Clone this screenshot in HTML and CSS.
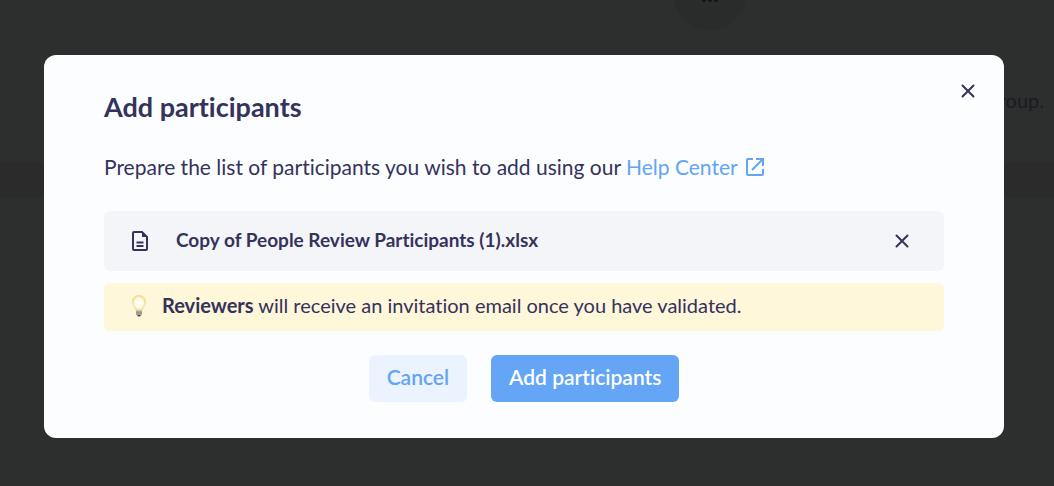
FILE: index.html
```html
<!DOCTYPE html>
<html lang="en">
<head>
<meta charset="UTF-8">
<meta name="viewport" content="width=device-width, initial-scale=1.0">
<title>Add participants</title>
<link rel="stylesheet" href="styles.css">
</head>
<body>
<!-- Page behind the modal -->
<div class="page">
  <div class="page-top">
    <button class="more" type="button" aria-label="More">
      <svg width="16" height="4" viewBox="0 0 16 4"><circle cx="2" cy="2" r="2"/><circle cx="8" cy="2" r="2"/><circle cx="14" cy="2" r="2"/></svg>
    </button>
  </div>
  <p class="page-text">group.</p>
  <div class="page-row"></div>
</div>

<!-- Modal -->
<div class="overlay">
  <div class="modal" role="dialog" aria-labelledby="modal-title">
    <button class="icon-btn close" type="button" aria-label="Close">
      <svg width="14" height="14" viewBox="0 0 14 14"><path d="M1.5 1.5l11 11M12.5 1.5l-11 11"/></svg>
    </button>
    <h1 class="title" id="modal-title">Add participants</h1>
    <p class="intro">Prepare the list of participants you wish to add using our
      <a class="help" href="#">Help Center<svg class="help-icon" width="20" height="20" viewBox="0 0 20 20"><path d="M8 2H3a1 1 0 0 0-1 1v14a1 1 0 0 0 1 1h14a1 1 0 0 0 1-1v-5M11 2h7v7M18 2L7 13"/></svg></a>
    </p>
    <div class="file">
      <svg class="file-icon" width="16" height="20" viewBox="0 0 16 20"><path d="M10 1H2a1 1 0 0 0-1 1v16a1 1 0 0 0 1 1h12a1 1 0 0 0 1-1V6zM4.5 11.500h7M4.500 15h7"/><path class="fold" d="M10 1v5h5z"/></svg>
      <span class="file-name">Copy of People Review Participants (1).xlsx</span>
      <button class="icon-btn" type="button" aria-label="Remove file">
        <svg width="14" height="14" viewBox="0 0 14 14"><path d="M1.5 1.5l11 11M12.5 1.5l-11 11"/></svg>
      </button>
    </div>
    <div class="notice">
      <svg class="bulb" width="14" height="22" viewBox="0 0 14 22">
        <defs>
          <radialGradient id="glow" cx="50%" cy="50%" r="55%">
            <stop offset="0" stop-color="#ffffff"/>
            <stop offset="0.6" stop-color="#fffae4"/>
            <stop offset="1" stop-color="#f0d273"/>
          </radialGradient>
        </defs>
        <path fill="url(#glow)" stroke="#ecd489" stroke-width="0.6" d="M7 .5C3.200.5.500 3.300.500 6.800c0 3.200 2.700 4.800 3.500 8.700h6c.8-3.900 3.500-5.500 3.500-8.700C13.500 3.300 10.800.5 7 .5z"/>
        <path fill="#b9b5a4" d="M4 15.500h6v3.500l-1 1H5l-1-1z"/>
        <path fill="#858279" d="M4 16.800h6v.8H4zM4 18.600h6v.8H4z"/>
        <path fill="#4b4a4d" d="M5 20h4l-1 1.600H6z"/>
      </svg>
      <p class="notice-text"><strong>Reviewers</strong> will receive an invitation email once you have validated.</p>
    </div>
    <div class="actions">
      <button class="btn btn-light" type="button">Cancel</button>
      <button class="btn btn-main" type="button">Add participants</button>
    </div>
  </div>
</div>
</body>
</html>
```
FILE: styles.css
```css
* {
  box-sizing: border-box;
}
body {
  margin: 0;
  background-color: #2d2f2e;
  color: #35325c;
  font-family: Lato, "Open Sans", sans-serif;
  font-size: 20px;
  line-height: 24px;
  font-variant-ligatures: none;
}
h1, p {
  margin: 0;
}
button {
  border: none;
  padding: 0;
  font-family: inherit;
  font-variant-ligatures: inherit;
  cursor: pointer;
}
svg {
  display: block;
  flex: none;
}

/* Page behind the modal */
.page {
  height: 100vh;
  overflow: hidden;
  color: #1b1a25;
}
.page-top {
  display: flex;
  justify-content: center;
  padding-left: 366px;
  margin-top: -42px;
}
.more {
  display: flex;
  align-items: center;
  justify-content: center;
  width: 72px;
  height: 72px;
  padding-top: 12px;
  border-radius: 50%;
  background-color: #2a2b2b;
}
.more svg {
  fill: #14131f;
}
.page-text {
  margin-top: 58px;
  padding-right: 10px;
  text-align: right;
}
.page-row {
  height: 36px;
  margin-top: 50px;
  background-color: #2c2b2b;
}

/* Modal */
.overlay {
  position: fixed;
  inset: 0;
  padding: 55px 50px 48px 44px;
}
.modal {
  position: relative;
  padding: 36px 60px;
  border-radius: 12px;
  background-color: #fbfdff;
}
.icon-btn {
  display: flex;
  align-items: center;
  justify-content: center;
  width: 32px;
  height: 32px;
  background: none;
}
.icon-btn svg {
  fill: none;
  stroke: #35325c;
  stroke-width: 2;
  stroke-linecap: round;
}
.close {
  position: absolute;
  top: 20px;
  right: 20px;
}
.title {
  font-size: 27px;
  line-height: 32px;
  font-weight: 700;
}
.intro {
  margin: 32px 0;
  font-size: 21px;
}
.help {
  color: #63a4f4;
  text-decoration: none;
}
.help-icon {
  display: inline-block;
  margin-left: 7px;
  vertical-align: -2px;
  fill: none;
  stroke: #63a4f4;
  stroke-width: 2;
}
.file,
.notice {
  display: flex;
  align-items: center;
  padding: 0 28px;
  border-radius: 6px;
}
.file {
  height: 60px;
  padding-right: 26px;
  background-color: #f4f5f9;
}
.file-icon {
  fill: none;
  stroke: #35325c;
  stroke-width: 2;
}
.fold {
  fill: #35325c;
  stroke: none;
}
.file-name,
.notice-text {
  padding-bottom: 2px;
}
.file-name {
  flex: 1;
  margin-left: 28px;
  font-size: 19px;
  font-weight: 700;
}
.notice {
  height: 48px;
  margin-top: 12px;
  padding-bottom: 2px;
  background-color: #fef7da;
}
.notice-text {
  margin-left: 16px;
  font-size: 20px;
}
.actions {
  display: flex;
  justify-content: center;
  gap: 24px;
  margin-top: 24px;
}
.btn {
  height: 47px;
  padding: 0 18px 4px;
  border-radius: 6px;
  font-size: 21px;
  font-weight: 600;
}
.btn-light {
  background-color: #ebf3fe;
  color: #63a4f4;
}
.btn-main {
  background-color: #64a5f5;
  color: #ffffff;
}
```
